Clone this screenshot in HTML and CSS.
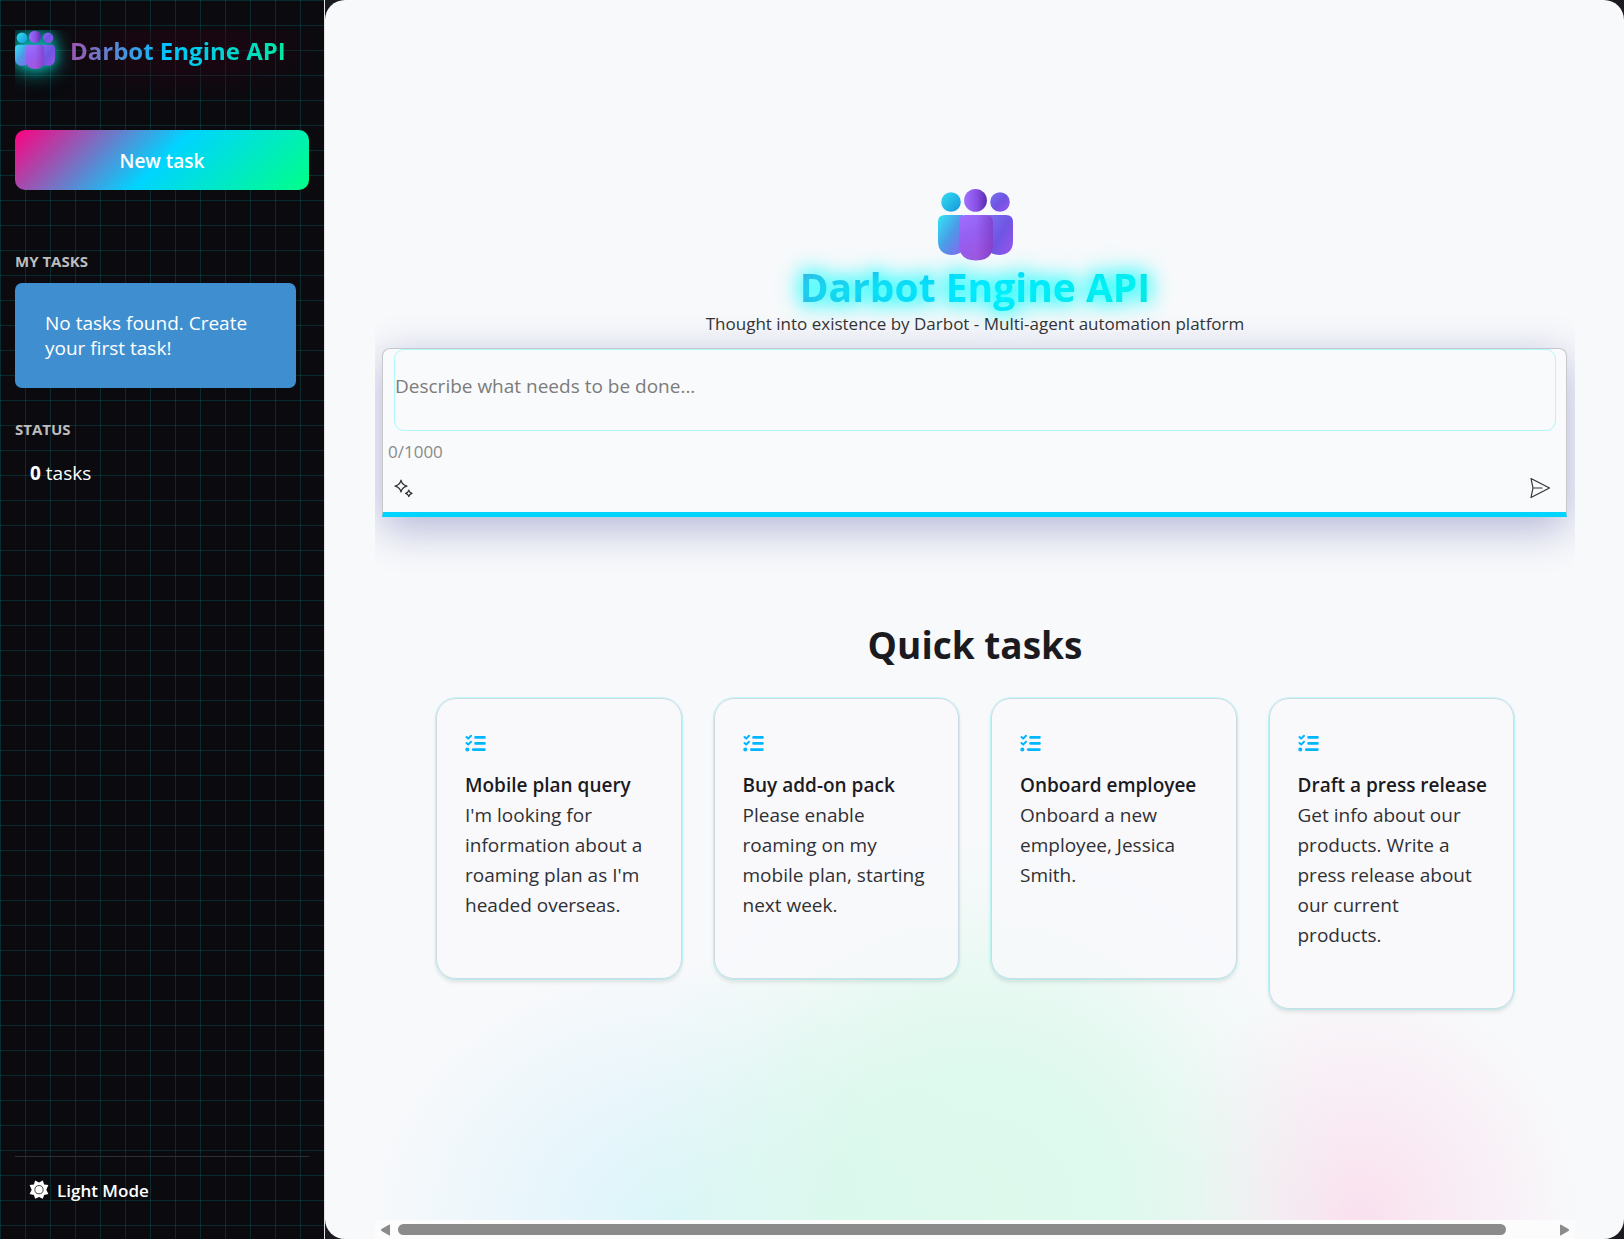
FILE: index.html
```html
<!DOCTYPE html>
<html lang="en">
<head>
<meta charset="utf-8">
<title>Darbot Engine API</title>
<link rel="stylesheet" href="styles.css">
</head>
<body>
<svg class="defs" aria-hidden="true">
  <defs>
    <linearGradient id="cyan" x1="0" y1="0" x2="1" y2="1"><stop offset="0" stop-color="#36dff0"/><stop offset="1" stop-color="#1496dc"/></linearGradient>
    <linearGradient id="cyanBody" x1="0" y1="0" x2="1" y2="1"><stop offset="0" stop-color="#2fe6f2"/><stop offset=".5" stop-color="#4c9be8"/><stop offset="1" stop-color="#8f62ee"/></linearGradient>
    <linearGradient id="violet" x1="0" y1="0" x2="1" y2="1"><stop offset="0" stop-color="#7a72f2"/><stop offset=".5" stop-color="#6f55e2"/><stop offset="1" stop-color="#9a55ee"/></linearGradient>
    <linearGradient id="purple" x1="0" y1="0" x2="1" y2="0"><stop offset="0" stop-color="#a070ff"/><stop offset=".55" stop-color="#8850e4"/><stop offset="1" stop-color="#5a2cae"/></linearGradient>
    <linearGradient id="purpleBody" x1="0" y1="0" x2=".4" y2="1"><stop offset="0" stop-color="#9f6fff"/><stop offset=".5" stop-color="#955ff2"/><stop offset="1" stop-color="#a355e0"/></linearGradient>
    <linearGradient id="shade" x1="0" y1="0" x2="1" y2="0"><stop offset=".5" stop-color="#6a2bb0" stop-opacity="0"/><stop offset="1" stop-color="#6a2bb0" stop-opacity=".5"/></linearGradient>
    <symbol id="logo" viewBox="0 0 75 72">
      <circle cx="13" cy="13" r="9.8" fill="url(#cyan)"/>
      <circle cx="62" cy="13" r="9.8" fill="url(#violet)"/>
      <circle cx="37.500" cy="11.400" r="11.400" fill="url(#purple)"/>
      <path d="M7 26h18v36q-5 4-12 4Q0 65 0 52V33q0-7 7-7z" fill="url(#cyanBody)"/>
      <path d="M68 26H50v36q5 4 12 4 13-1 13-14V33q0-7-7-7z" fill="url(#violet)"/>
      <path d="M27 26h21q7 0 7 7v22q0 16.500-17 16.500T21 55V33q0-7 6-7z" fill="url(#purpleBody)"/>
      <path d="M27 26h21q7 0 7 7v22q0 16.500-17 16.500T21 55V33q0-7 6-7z" fill="url(#shade)"/>
    </symbol>
    <symbol id="tasks" viewBox="0 0 22 20">
      <g fill="none" stroke="#00b7ff" stroke-linecap="round" stroke-linejoin="round">
        <path stroke-width="2" d="M1.500 4l1.700 1.600L6 2.700M1.500 10l1.700 1.600L6 8.700"/>
        <path stroke-width="2.600" d="M10.500 4.400h9M10.500 10.400h9M8.200 16.600h11.300"/>
      </g>
      <circle cx="2.300" cy="16.600" r="2" fill="#00b7ff"/>
    </symbol>
  </defs>
</svg>
<div class="app">
  <aside class="sidebar">
    <header class="brand">
      <svg class="brand-logo" aria-hidden="true"><use href="#logo"/></svg>
      <span class="brand-name">Darbot Engine API</span>
    </header>
    <button class="new-task" type="button">New task</button>
    <h2 class="section-label section-label-first">MY TASKS</h2>
    <p class="empty">No tasks found. Create your first task!</p>
    <h2 class="section-label">STATUS</h2>
    <p class="status"><strong>0</strong> tasks</p>
    <footer class="side-footer">
      <button class="mode" type="button">
        <svg width="20" height="20" viewBox="0 0 20 20" aria-hidden="true">
          <path fill="#fff" d="M10 2.500L13.800 .6l1.300 3.900 4.300.6L17.300 9.700l2.100 4.200-4.300 1-1.300 3.900L10 17l-3.800 1.800-1.300-3.900-4.300-1L2.700 9.700.6 5.100l4.300-.6L6.200.6z"/>
          <circle cx="10" cy="9.700" r="4.100" fill="#fff" stroke="#444" stroke-width="1"/>
        </svg>
        Light Mode
      </button>
    </footer>
  </aside>
  <main class="main">
    <div class="content">
      <section class="hero">
        <svg class="hero-logo" aria-hidden="true"><use href="#logo"/></svg>
        <h1 class="hero-title">Darbot Engine API</h1>
        <p class="hero-sub">Thought into existence by Darbot - Multi-agent automation platform</p>
      </section>
      <form class="prompt">
        <textarea class="prompt-text" aria-label="Task description" placeholder="Describe what needs to be done..."></textarea>
        <span class="count">0/1000</span>
        <div class="prompt-actions">
          <button class="icon-btn" type="button" aria-label="Improve prompt">
            <svg width="20" height="20" viewBox="0 0 20 20" fill="none" stroke="#333" stroke-width="1.200" stroke-linejoin="round" aria-hidden="true">
              <path d="M7 2.200Q8 7 13 8.200 8 9.400 7 14 6 9.400 1 8.200 6 7 7 2.200z"/>
              <path d="M14.800 12.200q.6 2.500 3.200 3.200-2.600.7-3.200 3.200-.6-2.500-3.200-3.200 2.600-.7 3.200-3.200z"/>
            </svg>
          </button>
          <button class="icon-btn" type="button" aria-label="Send">
            <svg width="22" height="22" viewBox="0 0 22 22" fill="none" stroke="#333" stroke-width="1.200" stroke-linejoin="round" stroke-linecap="round" aria-hidden="true">
              <path d="M2 1.500L20.500 11 2 20.500 4 11zM4 11h9"/>
            </svg>
          </button>
        </div>
      </form>
      <section class="quick">
        <h2 class="quick-title">Quick tasks</h2>
        <div class="cards">
          <article class="card">
            <svg class="card-icon" aria-hidden="true"><use href="#tasks"/></svg>
            <h3 class="card-title">Mobile plan query</h3>
            <p class="card-text">I'm looking for information about a roaming plan as I'm headed overseas.</p>
          </article>
          <article class="card">
            <svg class="card-icon" aria-hidden="true"><use href="#tasks"/></svg>
            <h3 class="card-title">Buy add-on pack</h3>
            <p class="card-text">Please enable roaming on my mobile plan, starting next week.</p>
          </article>
          <article class="card">
            <svg class="card-icon" aria-hidden="true"><use href="#tasks"/></svg>
            <h3 class="card-title">Onboard employee</h3>
            <p class="card-text">Onboard a new employee, Jessica Smith.</p>
          </article>
          <article class="card">
            <svg class="card-icon" aria-hidden="true"><use href="#tasks"/></svg>
            <h3 class="card-title">Draft a press release</h3>
            <p class="card-text">Get info about our products. Write a press release about our current products.</p>
          </article>
        </div>
      </section>
    </div>
    <div class="scrollbar" aria-hidden="true">
      <svg width="9" height="12" viewBox="0 0 9 12"><path d="M9 1v10q0 1-1.500 0L.5 7q-1-1 0-2L7.500 1Q9 0 9 1z" fill="#8b8b8b"/></svg>
      <div class="track"><div class="thumb"></div></div>
      <svg width="9" height="12" viewBox="0 0 9 12"><path d="M0 1v10q0 1 1.500 0L8.500 7q1-1 0-2L1.500 1Q0 0 0 1z" fill="#8b8b8b"/></svg>
    </div>
  </main>
</div>
</body>
</html>
```
FILE: styles.css
```css
* { box-sizing: border-box; }

body {
  margin: 0;
  background: #1b1a20;
  font-family: "Open Sans", "Noto Sans", sans-serif;
  font-size: 19px;
  color: #1b1b1f;
}

h1, h2, h3, p { margin: 0; }

button {
  font: inherit;
  border: 0;
  background: none;
  padding: 0;
  cursor: pointer;
}

.defs { position: absolute; width: 0; height: 0; }

.app { display: flex; min-height: 100vh; }

/* Sidebar */
.sidebar {
  flex: 0 0 325px;
  display: flex;
  flex-direction: column;
  padding: 30px 15px 20px;
  border-right: 1px solid #e4e4e8;
  color: #fff;
  background:
    linear-gradient(rgba(0, 255, 255, .13) 1px, transparent 1px) 0 0 / 25px 25px,
    linear-gradient(90deg, rgba(0, 255, 255, .13) 1px, transparent 1px) 0 0 / 25px 25px,
    #0a0a0f;
}

.brand {
  display: flex;
  height: 80px;
  overflow: hidden;
  background: radial-gradient(ellipse 150px 50px at 58% 20px, rgba(50, 0, 20, .35) 40%, transparent);
}

.brand-logo {
  flex: none;
  width: 40px;
  height: 40px;
  filter: drop-shadow(0 0 6px rgba(0, 255, 240, .5)) drop-shadow(0 3px 10px rgba(0, 255, 240, .6));
}

.brand-name {
  flex: 1;
  height: 42px;
  padding-left: 15px;
  font-size: 24px;
  font-weight: 700;
  line-height: 42px;
  white-space: nowrap;
  color: transparent;
  background: linear-gradient(100deg, #c040a0, #00c4ff 45%, #00f090);
  background-clip: text;
  -webkit-background-clip: text;
}

.new-task {
  height: 60px;
  margin-top: 20px;
  padding-top: 2px;
  border-radius: 10px;
  font-weight: 600;
  color: #fff;
  background: linear-gradient(135deg, #ff0080, #00d4ff 50%, #00ff88);
}

.section-label {
  margin-top: 30px;
  font-size: 15px;
  font-weight: 700;
  line-height: 22px;
  color: #bdbdbd;
}

.section-label-first { margin-top: 60px; }

.empty {
  margin: 11px 13px 0 0;
  padding: 28px 30px 27px;
  border-radius: 7px;
  line-height: 25px;
  background: #3f8fd0;
}

.status {
  padding: 21px 15px;
  line-height: 25px;
}

.side-footer {
  margin-top: auto;
  padding: 18px 14px 0;
  border-top: 1px solid #2e2e33;
}

.mode {
  display: flex;
  align-items: center;
  gap: 8px;
  height: 30px;
  margin-bottom: 14px;
  font-size: 17px;
  font-weight: 600;
  color: #fff;
}

/* Main panel */
.main {
  flex: 1;
  min-width: 0;
  display: flex;
  flex-direction: column;
  padding: 0 49px 0 50px;
  border-radius: 20px;
  background: #f8f9fb;
}

.content {
  flex: 1;
  padding-top: 189px;
  overflow-x: clip;
  background:
    radial-gradient(ellipse 370px 390px at 50% 100%, rgba(216, 249, 234, .85), rgba(216, 249, 234, .82) 38%, rgba(216, 249, 234, .55) 60%, rgba(216, 249, 234, .2) 80%, transparent),
    radial-gradient(ellipse 220px 240px at 82% 100%, rgba(250, 218, 235, .8), rgba(250, 218, 235, .35) 55%, transparent),
    radial-gradient(ellipse 310px 260px at 25% 100%, rgba(212, 244, 250, .8), rgba(215, 242, 252, .45) 50%, transparent);
}

.hero {
  display: flex;
  flex-direction: column;
  align-items: center;
  text-align: center;
}

.hero-logo { width: 75px; height: 72px; }

.hero-title {
  width: 100%;
  font-size: 39px;
  font-weight: 700;
  line-height: 52px;
  color: transparent;
  background: linear-gradient(135deg, #ff0080, #00d4ff 50%, #00ff88);
  background-clip: text;
  -webkit-background-clip: text;
  text-shadow: 0 0 20px cyan, 0 0 20px rgba(0, 255, 255, .8), 0 0 40px rgba(0, 255, 255, .3);
}

.hero-sub {
  font-size: 17px;
  line-height: 22px;
  color: #333;
}

.prompt {
  display: flex;
  flex-direction: column;
  margin: 13px 8px 0 7px;
  border: 1px solid #c8c8cc;
  border-bottom: 5px solid #00d4ff;
  border-radius: 8px 8px 0 0;
  background: #f9fafb;
  box-shadow: 0 11px 44px rgba(10, 20, 130, .3);
}

.prompt-text {
  height: 82px;
  margin: 0 10px 0 11px;
  padding: 23px 0;
  border: 1px solid #b0f8fa;
  border-radius: 10px;
  font: inherit;
  line-height: 26px;
  resize: none;
  overflow: hidden;
  background: none;
}

.prompt-text::placeholder { color: #7c7c7c; }

.count {
  padding: 9px 5px 0;
  font-size: 17px;
  line-height: 24px;
  color: #8a8a8a;
}

.prompt-actions {
  display: flex;
  align-items: center;
  justify-content: space-between;
  height: 48px;
  padding: 0 15px 0 11px;
}

.icon-btn { display: flex; }

/* Quick tasks */
.quick { padding: 101px 61px 60px; }

.quick-title {
  font-size: 37px;
  font-weight: 700;
  line-height: 54px;
  text-align: center;
}

.cards {
  display: grid;
  grid-template-columns: repeat(4, minmax(0, 1fr));
  align-items: start;
  gap: 32px;
  margin-top: 26px;
}

.card {
  min-height: 281px;
  padding: 34px 28px 58px;
  border: 1px solid #cddbe3;
  border-radius: 20px;
  background: rgba(249, 250, 252, .7);
  box-shadow: 0 0 0 1px rgba(150, 245, 245, .55), 0 3px 4px rgba(0, 0, 0, .1);
}

.card-icon {
  display: block;
  width: 22px;
  height: 20px;
}

.card-title {
  margin-top: 17px;
  font-size: 19px;
  font-weight: 600;
  line-height: 30px;
  white-space: nowrap;
}

.card-text {
  line-height: 30px;
  color: #303034;
}

/* Horizontal scroll strip */
.scrollbar {
  display: flex;
  align-items: center;
  gap: 8px;
  height: 19px;
  padding: 0 6px;
  background: #fcfcfc;
}

.track { flex: 1; }

.thumb {
  width: 96%;
  height: 11px;
  border-radius: 6px;
  background: #8b8b8b;
}
```
